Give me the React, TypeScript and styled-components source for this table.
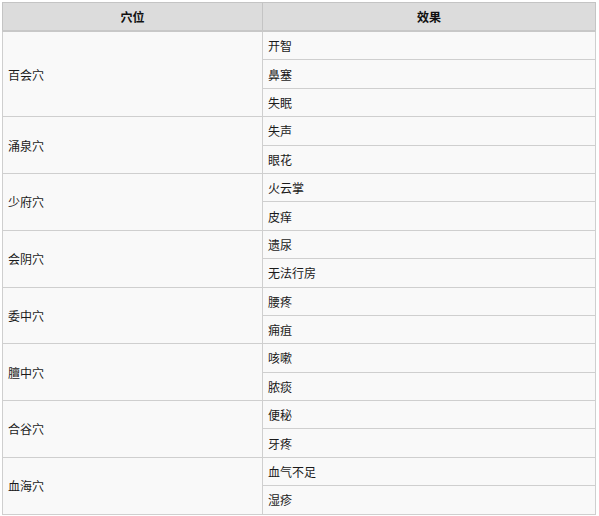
import React from "react";
import styled, { createGlobalStyle } from "styled-components";

const Global = createGlobalStyle`
  html, body { margin: 0; padding: 0; background: #ffffff; }
  body { font-family: "Noto Sans CJK SC", "Noto Sans", sans-serif; }
`;

const Wrap = styled.div`
  padding: 2px 0 0 2px;
`;

const Table = styled.table`
  border-collapse: collapse;
  width: 594px;
  table-layout: fixed;
  background: #f9f9f9;
  border: 1px solid #c4c4c4;
  font-size: 12px;
  color: #1a1a1a;
`;

const Th = styled.th`
  background: #dcdcdc;
  border: 1px solid #c4c4c4;
  border-bottom: 2px solid #c8c8c8;
  height: 27px;
  padding: 0;
  font-weight: bold;
  text-align: center;
  color: #111;
`;

const Td = styled.td`
  border: 1px solid #cfcfcf;
  height: 27.4px;
  padding: 0 0 0 5px;
  text-align: left;
  vertical-align: middle;
`;

const data: [string, string[]][] = [
  ["百会穴", ["开智", "鼻塞", "失眠"]],
  ["涌泉穴", ["失声", "眼花"]],
  ["少府穴", ["火云掌", "皮痒"]],
  ["会阴穴", ["遗尿", "无法行房"]],
  ["委中穴", ["腰疼", "痈疽"]],
  ["膻中穴", ["咳嗽", "脓痰"]],
  ["合谷穴", ["便秘", "牙疼"]],
  ["血海穴", ["血气不足", "湿疹"]],
];

export default function App() {
  return (
    <Wrap>
      <Global />
      <Table>
        <colgroup>
          <col style={{ width: 260 }} />
          <col />
        </colgroup>
        <thead>
          <tr>
            <Th>穴位</Th>
            <Th>效果</Th>
          </tr>
        </thead>
        <tbody>
          {data.flatMap(([point, effects]) =>
            effects.map((e, i) => (
              <tr key={point + e}>
                {i === 0 && <Td rowSpan={effects.length}>{point}</Td>}
                <Td>{e}</Td>
              </tr>
            ))
          )}
        </tbody>
      </Table>
    </Wrap>
  );
}
